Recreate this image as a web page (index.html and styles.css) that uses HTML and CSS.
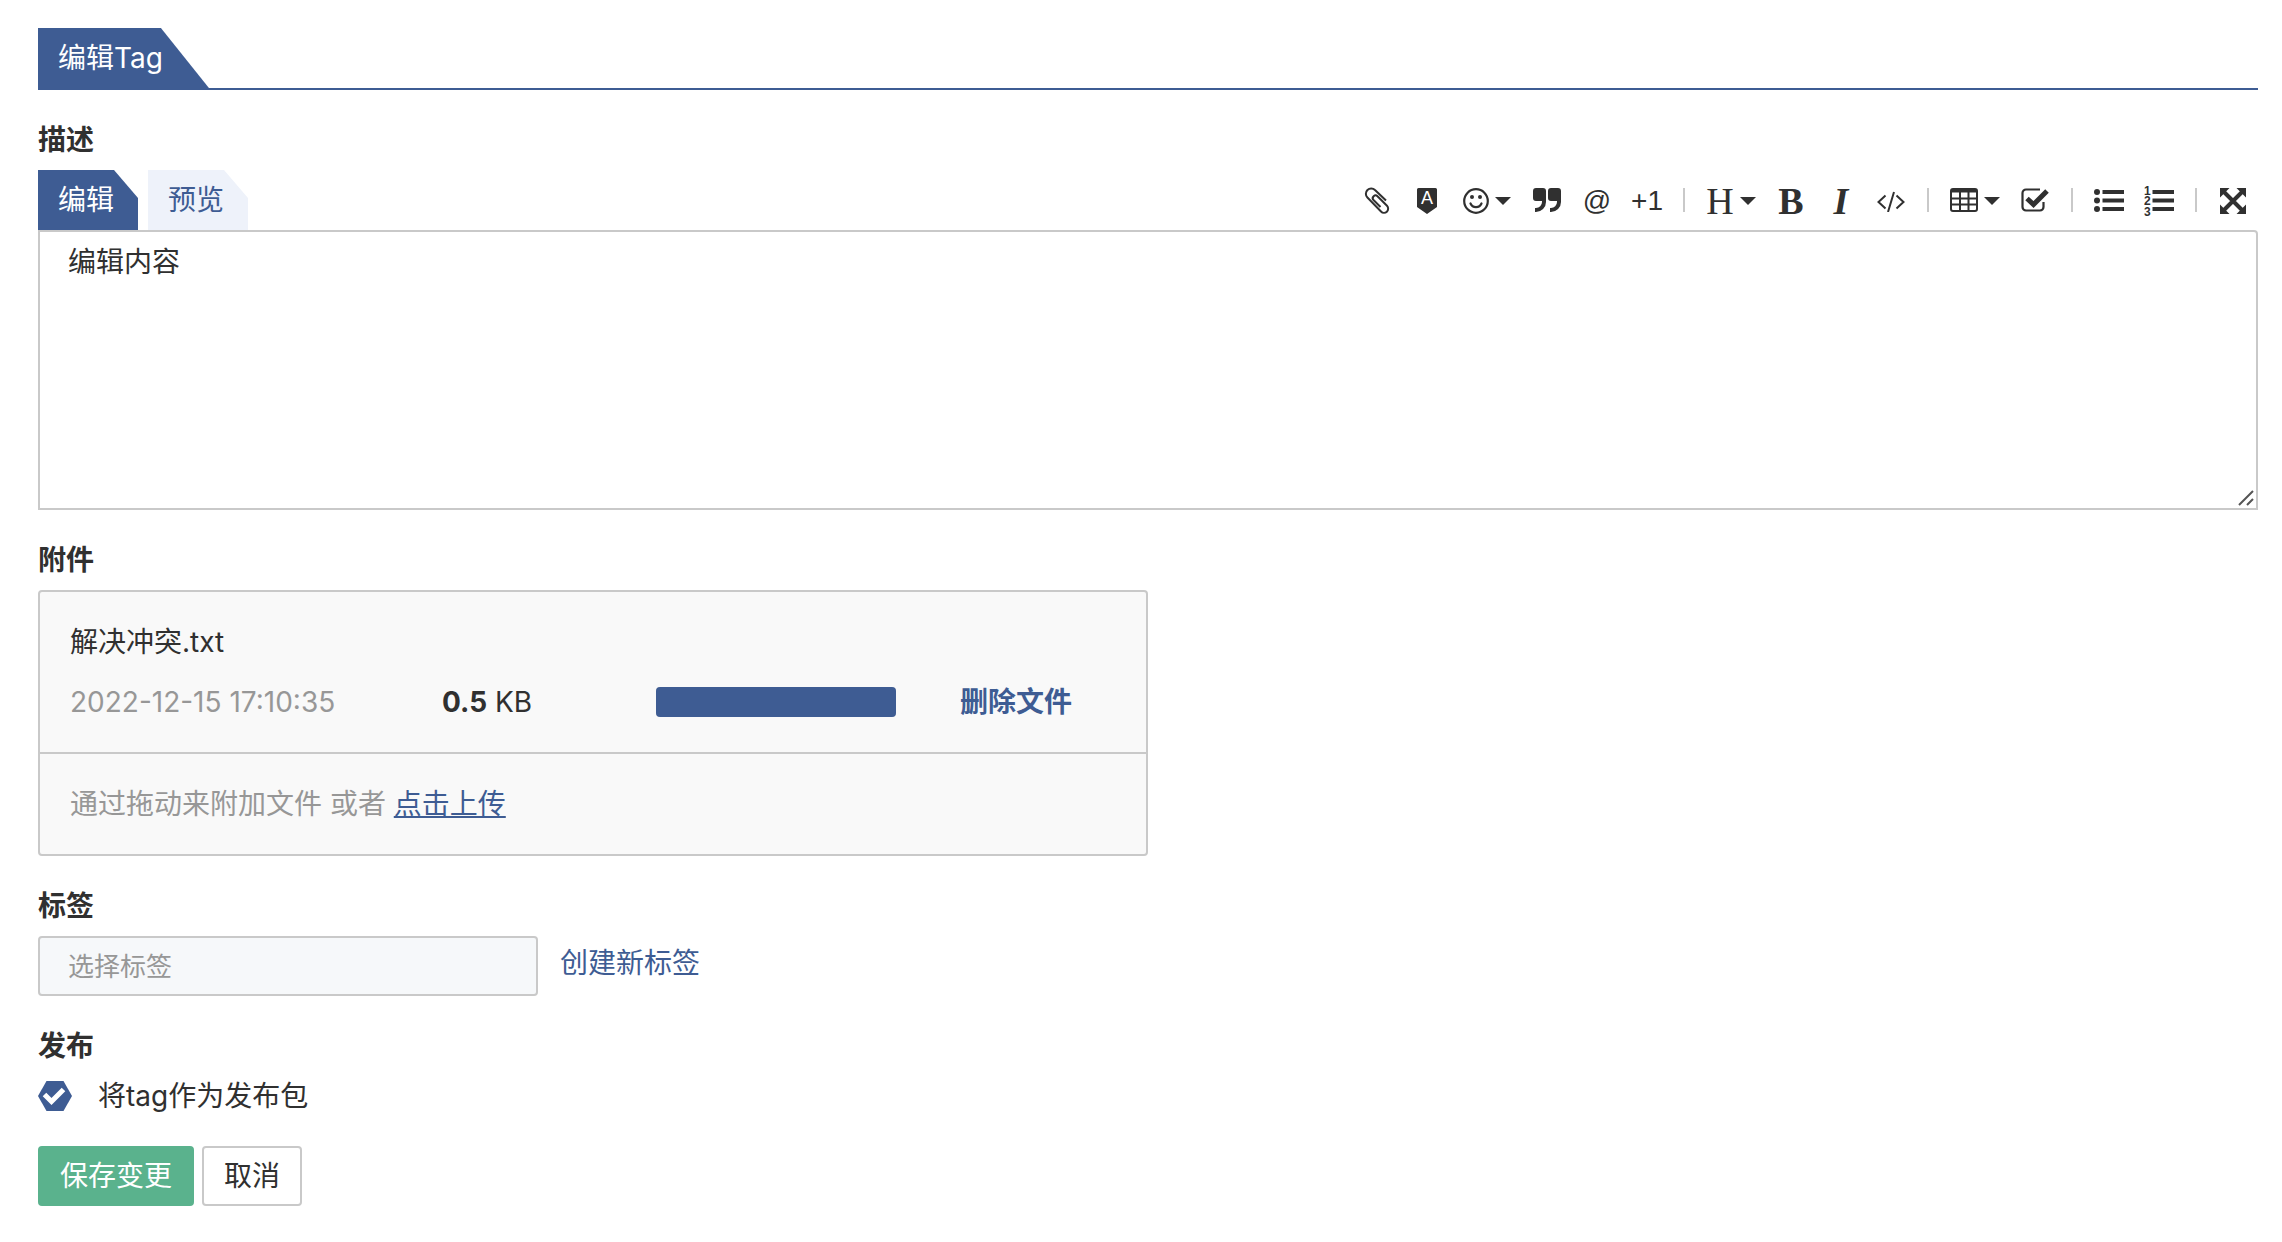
FILE: index.html
```html
<!DOCTYPE html>
<html lang="zh-CN">
<head>
    <meta charset="UTF-8">
    <meta name="viewport" content="width=device-width, initial-scale=1.0">
    <title>编辑Tag</title>
    <link rel="stylesheet" href="styles.css">
</head>
<body>
    <form class="tag-form">
        <div class="page-header">
            <h1 class="page-title">编辑Tag</h1>
        </div>

        <div class="field">
            <label class="field-label" for="description">描述</label>
            <div class="editor-head">
                <div class="tabs">
                    <button type="button" class="tab active">编辑</button>
                    <button type="button" class="tab">预览</button>
                </div>
                <div class="toolbar">
                    <button type="button" class="tool" title="附件">
                        <svg width="26" height="28" viewBox="0 0 26 28" fill="none" stroke="currentColor" stroke-width="2"><path d="M22 13.500L11 3A5.200 5.200 0 0 0 3.400 10.500L17 24.500A4.100 4.100 0 0 0 23 18.800L13.500 9.300A2.600 2.600 0 0 0 9.500 13L16.500 20"/></svg>
                    </button>
                    <button type="button" class="tool" title="标记">
                        <svg width="20" height="26" viewBox="0 0 20 26"><path fill="currentColor" d="M1.500 0h17A1.500 1.500 0 0 1 20 1.500V19L10 26 0 19V1.500A1.500 1.500 0 0 1 1.500 0z"/><text class="badge-letter" x="10" y="16" text-anchor="middle">A</text></svg>
                    </button>
                    <button type="button" class="tool dropdown" title="表情">
                        <svg width="26" height="26" viewBox="0 0 26 26"><circle cx="13" cy="13" r="11.800" fill="none" stroke="currentColor" stroke-width="2.200"/><circle cx="9" cy="9" r="2" fill="currentColor"/><circle cx="17" cy="9" r="2" fill="currentColor"/><path d="M7.500 15.500c2 4.700 9 4.700 11 0" fill="none" stroke="currentColor" stroke-width="2.200" stroke-linecap="round"/></svg>
                        <span class="caret"></span>
                    </button>
                    <button type="button" class="tool" title="引用">
                        <svg width="28" height="26" viewBox="0 0 28 26" fill="currentColor"><path d="M3 0h7a3 3 0 0 1 3 3v11a10 10 0 0 1-10 10H2v-4h1a6 6 0 0 0 6-6v-1H3a3 3 0 0 1-3-3V3a3 3 0 0 1 3-3z"/><path d="M18 0h7a3 3 0 0 1 3 3v11a10 10 0 0 1-10 10h-1v-4h1a6 6 0 0 0 6-6v-1h-6a3 3 0 0 1-3-3V3a3 3 0 0 1 3-3z"/></svg>
                    </button>
                    <button type="button" class="tool" title="提及">@</button>
                    <button type="button" class="tool" title="赞">+1</button>
                    <span class="separator"></span>
                    <button type="button" class="tool dropdown" title="标题"><span class="letter">H</span><span class="caret"></span></button>
                    <button type="button" class="tool" title="粗体"><b class="letter">B</b></button>
                    <button type="button" class="tool" title="斜体"><b class="letter italic">I</b></button>
                    <button type="button" class="tool" title="代码">
                        <svg width="28" height="22" viewBox="0 0 28 22" fill="none" stroke="currentColor" stroke-width="2"><path d="M8.500 5.500L1.500 12l7 6.500M19.500 5.500l7 6.500-7 6.500M17 2l-6 20"/></svg>
                    </button>
                    <span class="separator"></span>
                    <button type="button" class="tool dropdown" title="表格">
                        <svg width="28" height="26" viewBox="0 0 28 26"><path fill="none" stroke="currentColor" stroke-width="2" d="M3 1h22a2 2 0 0 1 2 2v18a2 2 0 0 1-2 2H3a2 2 0 0 1-2-2V3a2 2 0 0 1 2-2zM1 10.500h26M1 16.500h26M10 3v20M18.500 3v20"/><path fill="currentColor" d="M1 1h26v3.500H1z"/></svg>
                        <span class="caret"></span>
                    </button>
                    <button type="button" class="tool" title="任务">
                        <svg width="28" height="26" viewBox="0 0 28 26" fill="none" stroke="currentColor"><path stroke-width="2.200" d="M19 1.500H5A3.500 3.500 0 0 0 1.500 5v14A3.500 3.500 0 0 0 5 22.500h14a3.500 3.500 0 0 0 3.500-3.500v-5"/><path stroke-width="5" d="M6 10.500l6.500 6L26 3"/></svg>
                    </button>
                    <span class="separator"></span>
                    <button type="button" class="tool" title="无序列表">
                        <svg width="30" height="26" viewBox="0 0 30 26" fill="currentColor"><circle cx="3" cy="4" r="3"/><circle cx="3" cy="12.500" r="3"/><circle cx="3" cy="21" r="3"/><path d="M8.500 2H30v4H8.500zM8.500 10.500H30v4H8.500zM8.500 19H30v4H8.500z"/></svg>
                    </button>
                    <button type="button" class="tool" title="有序列表">
                        <svg width="30" height="34" viewBox="0 0 30 34" fill="currentColor"><text class="list-number" x="0" y="11">1</text><text class="list-number" x="0" y="21">2</text><text class="list-number" x="0" y="32">3</text><path d="M8.500 6H30v4H8.500zM8.500 14.500H30v4H8.500zM8.500 23H30v4H8.500z"/></svg>
                    </button>
                    <span class="separator"></span>
                    <button type="button" class="tool" title="全屏">
                        <svg width="26" height="26" viewBox="0 0 26 26"><path fill="currentColor" d="M0 0h9.500L0 9.500zM26 0v9.500L16.500 0zM0 26v-9.500L9.500 26zM26 26h-9.500l9.500-9.500z"/><path stroke="currentColor" stroke-width="4" d="M4 4l18 18M22 4L4 22"/></svg>
                    </button>
                </div>
            </div>
            <div class="editor">
                <textarea id="description" name="description">编辑内容</textarea>
                <svg class="grip" width="16" height="16" viewBox="0 0 16 16" fill="none" stroke="currentColor" stroke-width="2"><path d="M1 15L15 1M9 15l6-6"/></svg>
            </div>
        </div>

        <div class="field">
            <span class="field-label">附件</span>
            <div class="attachments">
                <div class="file">
                    <div class="file-name">解决冲突.txt</div>
                    <div class="file-info">
                        <span class="file-date">2022-12-15 17:10:35</span>
                        <span><b>0.5</b> KB</span>
                        <progress class="file-progress" value="100" max="100" aria-label="上传进度"></progress>
                        <a class="file-delete" href="#">删除文件</a>
                    </div>
                </div>
                <div class="dropzone">通过拖动来附加文件 或者 <a class="upload-link" href="#">点击上传</a></div>
            </div>
        </div>

        <div class="field">
            <label class="field-label" for="labels">标签</label>
            <div class="label-row">
                <input type="text" id="labels" name="labels" placeholder="选择标签">
                <a href="#">创建新标签</a>
            </div>
        </div>

        <div class="field">
            <span class="field-label">发布</span>
            <label class="release">
                <input type="checkbox" name="release" checked>
                <svg class="hexagon" width="34" height="30" viewBox="0 0 34 30"><path class="hexagon-shape" d="M8.500 0h17L34 15l-8.500 15h-17L0 15z"/><path class="hexagon-check" d="M6.500 13.500l7 7L25.500 8.500"/></svg>
                <span>将tag作为发布包</span>
            </label>
        </div>

        <div class="actions">
            <button type="submit" class="btn btn-save">保存变更</button>
            <button type="button" class="btn btn-cancel">取消</button>
        </div>
    </form>
</body>
</html>
```
FILE: styles.css
```css
* {
    box-sizing: border-box;
}
body {
    margin: 0;
    padding: 28px 24px 30px 38px;
    background-color: #fff;
    color: #303030;
    font-family: Inter, "Noto Sans CJK SC", sans-serif;
    font-size: 28px;
    line-height: 40px;
}
button,
input,
textarea {
    font: inherit;
    color: inherit;
}
button {
    padding: 0;
    border: none;
    background: none;
    cursor: pointer;
}
a {
    color: #3e5c93;
    text-decoration: none;
}
svg {
    display: block;
    flex: none;
}

/* header */
.page-header {
    display: flex;
    border-bottom: 2px solid #3e5c93;
}
.page-title {
    margin: 0;
    padding: 10px 46px 10px 20px;
    background-color: #3e5c93;
    clip-path: polygon(0 0, calc(100% - 48px) 0, 100% 100%, 0 100%);
    color: #fff;
    font-size: 28px;
    font-weight: normal;
}
.field {
    margin-top: 30px;
}
.field-label {
    display: block;
    margin-bottom: 10px;
    font-weight: bold;
}

/* editor */
.editor-head {
    display: flex;
    justify-content: space-between;
}
.tabs {
    display: flex;
    gap: 10px;
}
.tab {
    width: 100px;
    height: 60px;
    padding-right: 4px;
    background-color: #eef2fa;
    clip-path: polygon(0 0, 76% 0, 100% 28px, 100% 100%, 0 100%);
    color: #3e5c93;
}
.tab.active {
    background-color: #3e5c93;
    color: #fff;
}
.toolbar {
    display: flex;
    align-items: center;
}
.tool {
    display: flex;
    align-items: center;
    justify-content: center;
    gap: 6px;
    width: 50px;
    height: 60px;
    padding-top: 2px;
    font-family: "Liberation Sans", sans-serif;
}
.tool.dropdown {
    width: 70px;
}
.caret {
    border: 8px solid transparent;
    border-top-color: currentColor;
    border-bottom: none;
}
.separator {
    width: 2px;
    height: 24px;
    margin: 0 11px;
    background-color: #c9c9c9;
}
.letter {
    font-family: "Liberation Serif", serif;
    font-size: 38px;
}
.italic {
    font-style: italic;
}
.badge-letter {
    fill: #fff;
    font-size: 18px;
}
.list-number {
    font-size: 12px;
    font-weight: bold;
}
.editor {
    position: relative;
}
.editor textarea {
    display: block;
    width: 100%;
    height: 280px;
    padding: 10px 28px;
    border: 2px solid #c9c9c9;
    border-radius: 0 4px 0 0;
    outline: none;
    resize: none;
}
.grip {
    position: absolute;
    right: 4px;
    bottom: 4px;
    color: #555;
}

/* attachments */
.attachments {
    width: 50%;
    border: 2px solid #c9c9c9;
    border-radius: 4px;
    background-color: #f9f9f9;
}
.file {
    padding: 30px;
    border-bottom: 2px solid #c9c9c9;
}
.file-info {
    display: grid;
    grid-template-columns: 372fr 214fr 304fr 156fr;
    align-items: center;
    margin-top: 20px;
}
.file-date,
.dropzone {
    color: #979797;
}
.file-progress {
    width: 240px;
    height: 30px;
    border: none;
    appearance: none;
}
.file-progress::-webkit-progress-bar {
    border-radius: 4px;
    background-color: #e5e5e5;
}
.file-progress::-webkit-progress-value {
    border-radius: 4px;
    background-color: #3e5c93;
}
.file-delete {
    font-weight: bold;
}
.dropzone {
    padding: 30px;
}
.upload-link {
    text-decoration: underline;
}

/* labels */
.label-row {
    display: flex;
    gap: 22px;
    align-items: flex-start;
}
.label-row input {
    width: 500px;
    height: 60px;
    padding: 0 28px;
    border: 2px solid #c9c9c9;
    border-radius: 4px;
    background-color: #f6f8fa;
    font-size: 26px;
}
.label-row input::placeholder {
    color: #979797;
}
.label-row a {
    padding-top: 7px;
}

/* release */
.release {
    display: flex;
    align-items: center;
    position: relative;
    gap: 26px;
    cursor: pointer;
}
.release input {
    position: absolute;
    width: 34px;
    height: 30px;
    margin: 0;
    opacity: 0;
}
.hexagon-shape {
    fill: #fff;
    stroke: #c9c9c9;
}
.hexagon-check {
    fill: none;
    stroke: #fff;
    stroke-width: 5;
}
.release input:checked + .hexagon .hexagon-shape {
    fill: #3e5c93;
    stroke: none;
}

/* buttons */
.actions {
    display: flex;
    gap: 8px;
    margin-top: 30px;
}
.btn {
    height: 60px;
    padding: 0 20px;
    border: 2px solid #c9c9c9;
    border-radius: 4px;
}
.btn-save {
    border-color: #5ab28d;
    background-color: #5ab28d;
    color: #fff;
}
```
